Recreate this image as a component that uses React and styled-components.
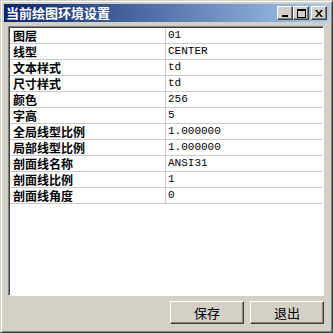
import React from "react";
import styled, { createGlobalStyle } from "styled-components";

const Global = createGlobalStyle`
  html, body { margin: 0; padding: 0; background: #d4d0c8; }
  body { width: 333px; height: 333px; overflow: hidden; font-family: "Noto Sans CJK SC", sans-serif; }
`;

const Window = styled.div`
  box-sizing: border-box;
  width: 333px;
  height: 333px;
  background: #d4d0c8;
  border-top: 1px solid #d4d0c8;
  border-left: 1px solid #d4d0c8;
  border-right: 1px solid #404040;
  border-bottom: 1px solid #404040;
  box-shadow: inset 1px 1px 0 #ffffff, inset -1px -1px 0 #808080;
  padding: 3px;
  display: flex;
  flex-direction: column;
`;

const TitleBar = styled.div`
  height: 18px;
  background: linear-gradient(to right, #0a246a, #a6caf0);
  display: flex;
  align-items: center;
  padding: 0 2px;
`;

const Title = styled.div`
  flex: 1;
  color: #ffffff;
  font-weight: bold;
  font-size: 13px;
  line-height: 18px;
`;

const CapButton = styled.div`
  box-sizing: border-box;
  width: 16px;
  height: 14px;
  background: #d4d0c8;
  border-top: 1px solid #ffffff;
  border-left: 1px solid #ffffff;
  border-right: 1px solid #404040;
  border-bottom: 1px solid #404040;
  box-shadow: inset -1px -1px 0 #808080;
  margin-left: ${(p) => (p.$gap ? "2px" : "0")};
  display: flex;
  align-items: center;
  justify-content: center;
`;

const Body = styled.div`
  flex: 1;
  display: flex;
  flex-direction: column;
  padding: 4px 5px 7px 4px;
`;

const Grid = styled.div`
  box-sizing: border-box;
  height: 270px;
  background: #ffffff;
  border-top: 1px solid #808080;
  border-left: 1px solid #808080;
  border-right: 1px solid #ffffff;
  border-bottom: 1px solid #ffffff;
  box-shadow: inset 1px 1px 0 #404040;
  padding: 1px 1px 0 1px;
`;

const Row = styled.div`
  display: grid;
  grid-template-columns: 156px 1fr;
  height: 16px;
  border-bottom: 1px solid #c8c8c8;
  box-sizing: border-box;
`;

const Label = styled.div`
  border-right: 1px solid #c8c8c8;
  padding-left: 3px;
  font-weight: bold;
  font-size: 12px;
  line-height: 15px;
  height: 15px;
  color: #000;
  white-space: nowrap;
`;

const Value = styled.div`
  padding-left: 2px;
  font-family: "Liberation Mono", monospace;
  font-size: 11px;
  line-height: 15px;
  height: 15px;
  color: #000;
  white-space: nowrap;
`;

const ButtonRow = styled.div`
  display: flex;
  justify-content: flex-end;
  gap: 6px;
  margin-top: 5px;
`;

const Button = styled.div`
  box-sizing: border-box;
  width: 74px;
  height: 23px;
  background: #d4d0c8;
  border-top: 1px solid #ffffff;
  border-left: 1px solid #ffffff;
  border-right: 1px solid #404040;
  border-bottom: 1px solid #404040;
  box-shadow: inset -1px -1px 0 #808080;
  display: flex;
  align-items: center;
  justify-content: center;
  font-size: 13px;
  line-height: 16px;
  color: #000;
`;

const rows = [
  ["图层", "01"],
  ["线型", "CENTER"],
  ["文本样式", "td"],
  ["尺寸样式", "td"],
  ["颜色", "256"],
  ["字高", "5"],
  ["全局线型比例", "1.000000"],
  ["局部线型比例", "1.000000"],
  ["剖面线名称", "ANSI31"],
  ["剖面线比例", "1"],
  ["剖面线角度", "0"],
];

export default function App() {
  return (
    <>
      <Global />
      <Window>
        <TitleBar>
          <Title>当前绘图环境设置</Title>
          <CapButton>
            <svg width="8" height="8" viewBox="0 0 8 8">
              <rect x="1" y="6" width="6" height="2" fill="#000" />
            </svg>
          </CapButton>
          <CapButton>
            <svg width="9" height="9" viewBox="0 0 9 9">
              <rect x="0.5" y="0.5" width="8" height="8" fill="none" stroke="#000" />
              <rect x="0" y="0" width="9" height="2" fill="#000" />
            </svg>
          </CapButton>
          <CapButton $gap>
            <svg width="8" height="7" viewBox="0 0 8 7">
              <path d="M0 0 L2 0 L4 2.5 L6 0 L8 0 L5 3.5 L8 7 L6 7 L4 4.5 L2 7 L0 7 L3 3.5 Z" fill="#000" />
            </svg>
          </CapButton>
        </TitleBar>
        <Body>
          <Grid>
            {rows.map(([k, v]) => (
              <Row key={k}>
                <Label>{k}</Label>
                <Value>{v}</Value>
              </Row>
            ))}
          </Grid>
          <ButtonRow>
            <Button>保存</Button>
            <Button>退出</Button>
          </ButtonRow>
        </Body>
      </Window>
    </>
  );
}
